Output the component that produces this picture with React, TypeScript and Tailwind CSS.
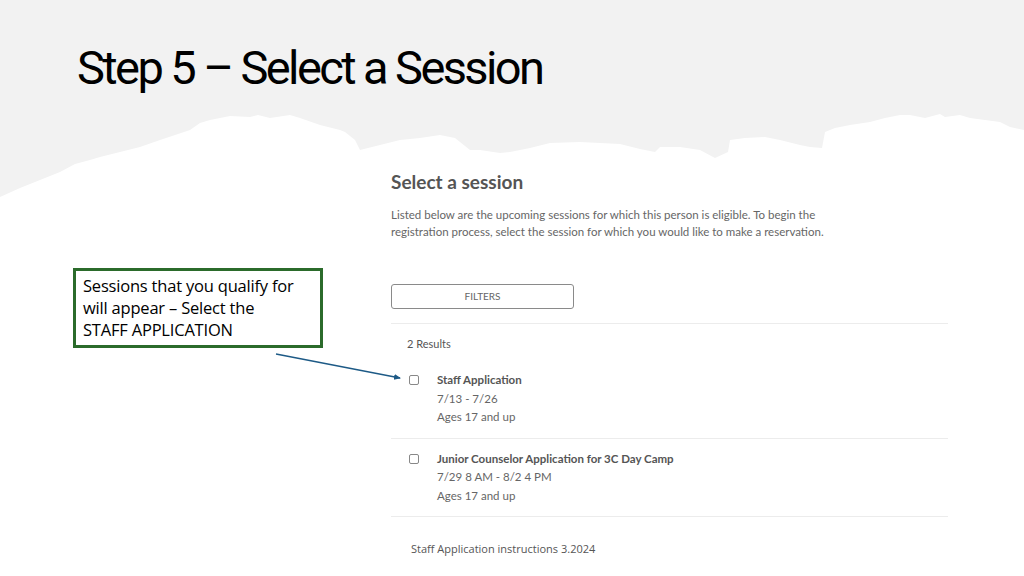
import React from 'react';

const tornEdge =
  'M0 0 H1024 V130 L1010 127 L1000 122 L985 120 L970 118 L960 115 L945 117 L940 114 L925 118 L910 115 L900 115 L885 118 L870 122 L850 125 L835 128 L825 132 L822 148 L810 147 L800 145 L780 140 L765 137 L745 138 L730 140 L728 152 L715 158 L700 150 L680 147 L660 147 L655 152 L640 149 L620 144 L600 143 L580 142 L550 143 L530 148 L510 152 L500 153 L480 150 L470 150 L455 138 L440 135 L420 138 L400 140 L380 145 L360 150 L355 140 L345 132 L340 130 L320 125 L300 118 L290 115 L270 118 L258 115 L250 117 L230 116 L210 120 L200 123 L190 130 L175 135 L160 140 L140 147 L120 152 L100 157 L90 160 L75 164 L60 172 L40 180 L20 188 L0 197 Z';

const sessions = [
    { name: 'Staff Application', dates: '7/13 - 7/26', ages: 'Ages 17 and up' },
    { name: 'Junior Counselor Application for 3C Day Camp', dates: '7/29 8 AM - 8/2 4 PM', ages: 'Ages 17 and up' },
];

const App: React.FC = () => {
    return (
        <div className="relative w-[1024px] h-[576px] overflow-hidden bg-white">
            {/* torn paper background */}
            <svg className="absolute inset-0" width="1024" height="576" viewBox="0 0 1024 576">
                <path d={tornEdge} fill="#f2f2f2" />
            </svg>

            <div className="relative">
                <h1
                    className="pl-[77px] pt-[42px] text-[47px] leading-[52px] text-black tracking-[-2.6px]"
                    style={{ fontFamily: 'Roboto, sans-serif' }}
                >
                    Step 5 – Select a Session
                </h1>

                <div className="flex pl-[73px] mt-[76px]">
                    <div className="w-[250px] pt-[98px]">
                        <div
                            className="border-[3px] border-[#2b6b2b] bg-white px-[7px] py-[4px] text-[16.5px] leading-[22px] text-black tracking-[-0.2px]"
                            style={{ fontFamily: '"Open Sans", sans-serif' }}
                        >
                            Sessions that you qualify for
                            <br />
                            will appear – Select the
                            <br />
                            STAFF APPLICATION
                        </div>
                    </div>

                    <div className="ml-[68px] w-[557px]" style={{ fontFamily: 'Lato, sans-serif' }}>
                        <h2 className="text-[19px] leading-[24px] font-bold text-[#555]">Select a session</h2>
                        <p className="mt-[12px] w-[475px] text-[11.5px] leading-[17px] text-[#666]">
                            Listed below are the upcoming sessions for which this person is eligible. To begin the
                            registration process, select the session for which you would like to make a reservation.
                        </p>
                        <button className="mt-[44px] w-[183px] h-[25px] border border-[#8a8a8a] rounded-[3px] text-[10px] text-[#666] bg-white">
                            FILTERS
                        </button>
                        <div className="mt-[14px] border-t border-[#ececec]" />
                        <div className="mt-[12px] pl-[16px] text-[11px] leading-[16px] text-[#555]">2 Results</div>

                        <div className="mt-[19px]">
                            {sessions.map((s, i) => (
                                <div
                                    key={s.name}
                                    className={
                                        i === 0
                                            ? 'flex pl-[18px] pb-[11px] border-b border-[#ececec]'
                                            : 'flex pl-[18px] pt-[11px] pb-[11px] border-b border-[#ececec]'
                                    }
                                >
                                    <div className="w-[10px] h-[10px] mt-[4px] border border-[#888] rounded-[2px] bg-white" />
                                    <div className="ml-[18px] text-[11.5px] leading-[18.5px] text-[#666]">
                                        <div className="font-bold text-[#555]">{s.name}</div>
                                        <div>{s.dates}</div>
                                        <div>{s.ages}</div>
                                    </div>
                                </div>
                            ))}
                        </div>

                        <div
                            className="mt-[24px] pl-[20px] text-[11px] leading-[16px] text-[#555]"
                            style={{ fontFamily: '"Open Sans", sans-serif' }}
                        >
                            Staff Application instructions 3.2024
                        </div>
                    </div>
                </div>
            </div>

            {/* callout arrow */}
            <svg className="absolute left-0 top-0 pointer-events-none" width="1024" height="576">
                <defs>
                    <marker id="head" markerWidth="8" markerHeight="8" refX="6" refY="4" orient="auto" markerUnits="userSpaceOnUse">
                        <path d="M0 1 L7 4 L0 7 Z" fill="#1d5a86" />
                    </marker>
                </defs>
                <line x1="276" y1="354" x2="400" y2="378" stroke="#1d5a86" strokeWidth="1.3" markerEnd="url(#head)" />
            </svg>
        </div>
    );
};

export default App;
